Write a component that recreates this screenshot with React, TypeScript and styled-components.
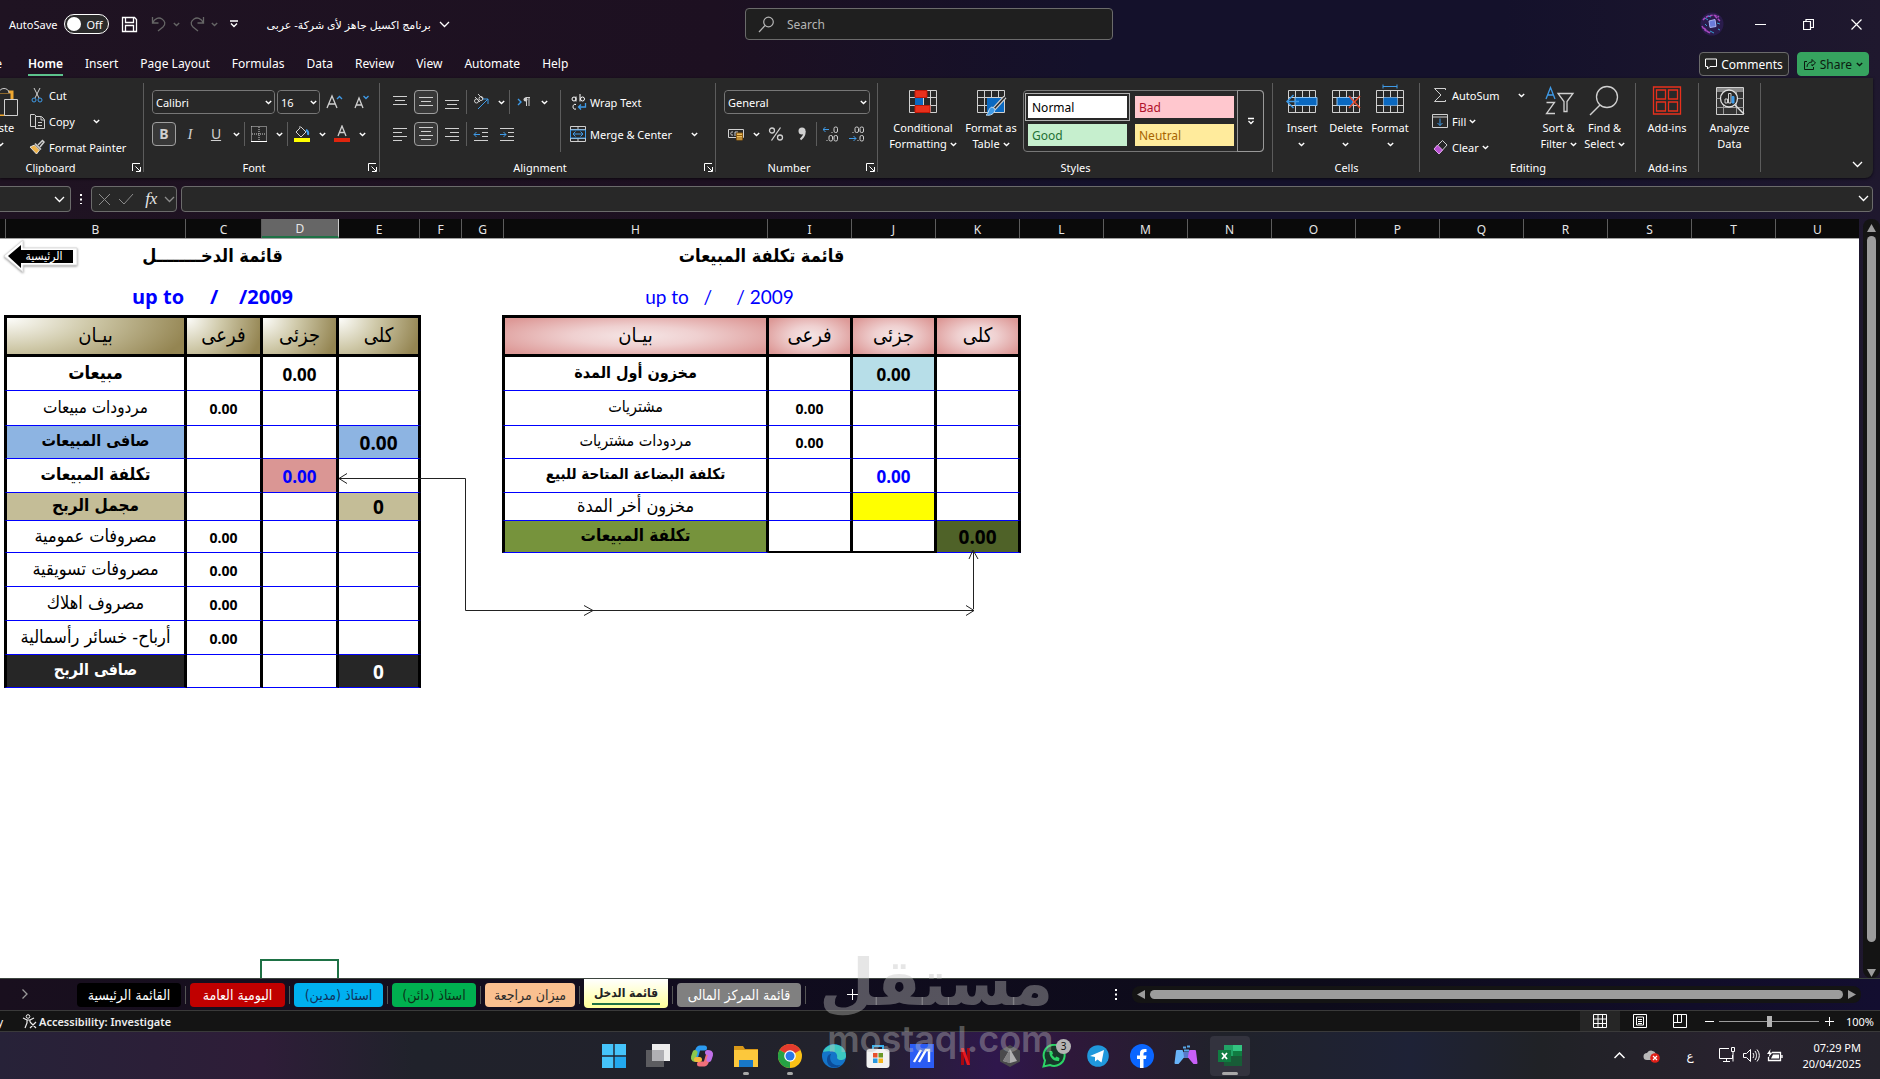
import React from "react";
import styled, { createGlobalStyle, css } from "styled-components";

const UI = `"Noto Sans", "DejaVu Sans", sans-serif`;
const NARROW = `"DejaVu Sans Condensed", "DejaVu Sans", sans-serif`;

const Global = createGlobalStyle`
  *, *::before, *::after { box-sizing: border-box; }
  body { margin: 0; background: #14112b; font-family: ${UI}; font-size: 12px; color: #fff; }
  button, input, select { font: inherit; color: inherit; }
  button { background: none; border: 0; padding: 0; cursor: pointer; }
`;

const Window = styled.div`
  display: flex; flex-direction: column; min-height: 100vh; overflow: hidden;
  position: relative;
  background: linear-gradient(90deg, #1f1322 0%, #1d1021 38%, #14112b 58%, #14112b 80%, #1f182e 100%);
`;

/* ---------- title bar ---------- */
const TitleBar = styled.header`
  display: grid; grid-template-columns: minmax(0, 736fr) 368px minmax(0, 767fr); align-items: center; height: 48px;
  padding-left: 9px;
`;
const QuickAccess = styled.div`display: flex; align-items: center; gap: 6px;`;
const ToggleLabel = styled.label`
  display: flex; align-items: center; gap: 7px; font-size: 11px;
  input { position: absolute; opacity: 0; }
`;
const ToggleTrack = styled.span`
  display: flex; align-items: center; gap: 5px; width: 45px; height: 20px; padding-left: 2px;
  border: 1px solid #fff; border-radius: 10px; background: #2b2b2b;
  &::before { content: ""; width: 14px; height: 14px; border-radius: 50%; background: #fff; }
`;
const QuickButton = styled.button<{ $w?: number; $dim?: boolean }>`
  display: flex; align-items: center; justify-content: center; gap: 6px; height: 24px;
  width: ${(p) => p.$w ?? 24}px; color: ${(p) => (p.$dim ? "#666" : "#fff")};
`;
const FileName = styled.button`
  display: flex; align-items: center; gap: 8px; font-size: 11px; margin-left: 17px; white-space: nowrap;
`;
const SearchBox = styled.label`
  display: flex; align-items: center; gap: 12px; height: 32px; padding: 0 12px;
  background: #1f1f1f; border: 1px solid #6b6b6b; border-radius: 4px; color: #b5b5b5;
  input { flex: 1; min-width: 0; border: 0; background: none; outline: 0; padding: 0; }
  input::placeholder { color: #b5b5b5; opacity: 1; }
`;
const WindowControls = styled.div`
  display: flex; justify-content: flex-end; align-items: center;
  button { width: 48px; height: 32px; display: grid; place-items: center; }
`;

/* ---------- ribbon tabs ---------- */
const TabRow = styled.nav`
  display: flex; align-items: center; height: 30px; padding: 2px 11px 0 0;
`;
const TabList = styled.div`display: flex; flex: 1; gap: 22px;`;
const RibbonTab = styled.button<{ $active?: boolean }>`
  height: 24px; font-size: 12px; border-bottom: 2px solid ${(p) => (p.$active ? "#5cc18c" : "transparent")};
  font-weight: ${(p) => (p.$active ? 600 : 400)};
`;
const CutTab = styled(RibbonTab)`
  width: 6px; display: flex; align-items: center; justify-content: flex-end; overflow: hidden; padding-right: 4px;
`;
const PillButton = styled.button<{ $green?: boolean }>`
  display: flex; align-items: center; gap: 4px; height: 24px; padding: 0 5px; margin-left: 8px;
  border-radius: 4px; border: 1px solid ${(p) => (p.$green ? "#36a35f" : "#6b6b6b")};
  background: ${(p) => (p.$green ? "#36a35f" : "#252525")}; color: ${(p) => (p.$green ? "#0b1a10" : "#fff")};
`;

/* ---------- ribbon ---------- */
const Ribbon = styled.section`
  display: flex; height: 100px; margin-right: 7px; background: #282828;
  border-bottom-right-radius: 8px; box-shadow: 0 1px 3px #0009;
`;
const Group = styled.div<{ $w: number }>`
  width: ${(p) => p.$w}px; flex: none; display: flex; flex-direction: column; position: relative;
  &::after { content: ""; position: absolute; right: 0; top: 5px; bottom: 6px; width: 1px; background: #5c5c5c; }
`;
const GroupBody = styled.div<{ $pad?: number; $top?: number }>`
  display: flex; flex: 1; min-height: 0; padding: ${(p) => p.$top ?? 4}px 7px 0 ${(p) => p.$pad ?? 8}px; white-space: nowrap;
`;
const GroupFoot = styled.div<{ $inset: number }>`
  display: flex; align-items: center; justify-content: center; height: 22px; flex: none; font-size: 11px; position: relative;
  padding-right: ${(p) => p.$inset}px;
  button { position: absolute; right: 3px; top: 7px; height: 9px; display: flex; }
`;
const Stack = styled.div<{ $gap?: number }>`display: flex; flex-direction: column; gap: ${(p) => p.$gap ?? 0}px;`;
const Row = styled.div<{ $tall?: boolean }>`display: flex; flex: none; align-items: center; gap: 2px; height: ${(p) => (p.$tall ? 26 : 24)}px;`;
const Divider = styled.span`width: 1px; height: 24px; background: #5c5c5c;`;
const TallDivider = styled.span`width: 1px; height: 62px; background: #5c5c5c; margin: 0 8px 0 10px;`;
const IconButton = styled.button<{ $on?: boolean }>`
  width: 24px; height: 24px; display: grid; place-items: center; color: #d0d0d0; font-size: 14px; line-height: 20px;
  ${(p) => p.$on && css`border: 1px solid #a0a0a0; border-radius: 4px; background: #383838;`}
`;
const ChevButton = styled.button`width: 12px; height: 24px; display: grid; place-items: center;`;
const TextButton = styled.button`
  display: flex; flex: none; align-items: center; height: 26px; gap: 3px; font-size: 11px;
`;
const IconSlot = styled.span`width: 18px; display: grid; place-items: center;`;
const Push = styled.span<{ $w: number }>`width: ${(p) => p.$w}px;`;
const BigButton = styled.button<{ $w: number }>`
  width: ${(p) => p.$w}px; display: flex; flex-direction: column; align-items: center; font-size: 11px; line-height: 16px;
  align-self: flex-start; padding-top: 2px; gap: 4px; white-space: nowrap;
  > span { display: flex; flex-direction: column; align-items: center; }
  > span > span { display: flex; align-items: center; gap: 3px; min-height: 16px; }
`;
const PasteColumn = styled.div`
  width: 20px; display: flex; justify-content: flex-end; overflow: hidden; margin-right: 8px;
`;
const Combo = styled.span<{ $w: number }>`
  display: grid; align-items: center; width: ${(p) => p.$w}px; height: 24px; border: 1px solid #777; border-radius: 4px;
  select { grid-area: 1 / 1; appearance: none; width: 100%; height: 22px; background: #282828; border: 0; outline: 0;
    border-radius: 4px; padding: 0 0 0 3px; font-size: 11px; }
  svg { grid-area: 1 / 1; justify-self: end; margin-right: 2px; pointer-events: none; }
`;
const Underlined = styled.span`text-decoration: underline;`;
const Italic = styled.i`font-family: "Liberation Serif", serif; font-size: 15px;`;
const Gallery = styled.div`
  display: grid; grid-template-columns: 107px 107px 25px; height: 62px; margin-top: 8px;
  border: 1px solid #777; border-radius: 4px;
`;
const GalleryColumn = styled.div`display: flex; flex-direction: column; padding: 2px 1px; `;
const StyleCell = styled.button<{ $bg: string; $fg: string; $on?: boolean }>`
  flex: 1; text-align: left; padding-left: 6px; background: ${(p) => p.$bg}; color: ${(p) => p.$fg};
  border: 1px solid ${(p) => (p.$on ? "#b0b0b0" : "#282828")}; box-shadow: inset 0 0 0 2px #282828; font-size: 12px;
`;
const GalleryMore = styled.button`border: 1px solid #999; border-radius: 0 4px 4px 0; margin: -1px; display: grid; place-items: center;`;
const CollapseButton = styled.button`margin: auto 10px 10px auto; display: flex;`;

/* ---------- formula bar ---------- */
const FormulaBar = styled.div`
  display: flex; align-items: center; height: 41px; padding: 7px 7px 6px 0;
`;
const fieldBox = css`height: 26px; border: 1px solid #6b6b6b; border-radius: 4px; background: #282828;`;
const NameBox = styled.div`
  ${fieldBox}; width: 71px; border-left: 0; border-radius: 0 4px 4px 0; display: flex; align-items: center; padding-right: 5px;
  input { flex: 1; min-width: 0; background: none; border: 0; outline: 0; }
`;
const Grip = styled.span`width: 20px; display: grid; place-items: center;`;
const FxBox = styled.div`
  ${fieldBox}; width: 86px; display: flex; align-items: center; justify-content: space-between; padding: 0 1px 0 6px; color: #8c8c8c;
  button { display: grid; place-items: center; height: 24px; }
`;
const FxButton = styled.button`color: #e6e6e6; font: italic 400 17px/24px "Liberation Serif", serif; padding-left: 5px;`;
const FormulaField = styled.div`
  ${fieldBox}; flex: 1; margin-left: 4px; display: flex; align-items: center; padding: 0 3px 2px 8px;
  input { flex: 1; background: none; border: 0; outline: 0; }
`;

/* ---------- sheet ---------- */
const Workbook = styled.main`display: flex; flex: 1;`;
const Sheet = styled.div`flex: 1; min-width: 0; display: flex; flex-direction: column; overflow: hidden;`;
const ColumnHeads = styled.div`
  display: grid; grid-template-columns: 6px 180px 76px 77px 81px 42px 42px 264px repeat(13, 84px);
  height: 20px; background: #0a0a0a; border-bottom: 1px solid #a0a0a0;
`;
const ColumnHead = styled.span<{ $sel?: boolean }>`
  display: flex; align-items: center; justify-content: center; border-right: 1px solid #5c5c5c; overflow: hidden;
  color: #e6e6e6; padding-top: 2px;
  ${(p) => p.$sel && css`background: #666; border-bottom: 2px solid #1e7145; border-right-color: #ccc;`}
`;
const Canvas = styled.div`
  flex: 1; background: #fff; color: #000; position: relative; display: flex; align-items: flex-start; gap: 81px; padding-left: 4px;
`;
const Statement = styled.table<{ $w: number }>`
  width: ${(p) => p.$w}px; table-layout: fixed; border-collapse: separate; border-spacing: 0; font-family: ${NARROW};
  td, th { padding: 0; text-align: center; overflow: hidden; white-space: nowrap; }
`;
const TitleCell = styled.th`&& { padding-bottom: 4px; } height: 38px; font-size: 18px; font-weight: 700; line-height: 24px;`;
const PeriodCell = styled.td<{ $bold?: boolean }>`
  && { white-space: pre; padding-top: 2px; }
  height: 38px; color: #00f; line-height: 28px;
  font-family: ${(p) => (p.$bold ? `"Open Sans"` : "Lato")}, sans-serif;
  font-size: ${(p) => (p.$bold ? 20 : 19)}px; font-weight: ${(p) => (p.$bold ? 700 : 400)};
`;
const HeadCell = styled.th<{ $tone: "olive" | "rose" }>`
  height: 42px; border: solid #000; border-width: 3px 3px 3px 0; font-size: 20px; font-weight: 400; line-height: 30px;
  && { padding-bottom: 3px; }
  &:first-child { border-left-width: 3px; }
  background: ${(p) =>
    p.$tone === "olive"
      ? "radial-gradient(ellipse 105% 190% at 0% 0%, #fdfdfb 0%, #cfc9a9 45%, #948552 100%)"
      : "radial-gradient(ellipse 60% 70% at 50% 50%, #f5e6e6 0%, #efd0d0 40%, #dd9997 100%)"};
`;
const BodyCell = styled.td<{ $bg?: string; $fg?: string; $size: number; $bold?: boolean; $h: number; $end?: boolean; $num?: boolean }>`
  height: ${(p) => p.$h}px; line-height: ${(p) => p.$h - 5}px; background: ${(p) => p.$bg ?? "#fff"}; color: ${(p) => p.$fg ?? "#000"};
  font-size: ${(p) => p.$size}px; font-weight: ${(p) => (p.$bold ? 700 : 400)};
  ${(p) => p.$num && css`font-family: "Open Sans", sans-serif; && { padding-top: 1px; }`}
  ${(p) => !p.$num && css`&& { padding-bottom: 3px; }`}
  border-right: 3px solid #000; border-bottom: ${(p) => (p.$end ? "2px solid #000" : "1px solid #00f")};
  &:first-child { border-left: 3px solid #000; }
`;
const Connector = styled.svg`position: absolute; left: 338px; top: 230px; pointer-events: none;`;
const SelectedCell = styled.div`
  position: absolute; left: 260px; bottom: 0; width: 79px; height: 19px; border: 2px solid #1e7145; border-bottom: 0;
`;
const HomeLink = styled.a`
  position: absolute; left: 2px; top: 0; width: 76px; height: 34px; color: #fff; text-decoration: none;
  display: grid; place-items: center; font: 12px/14px ${NARROW};
  svg, span { grid-area: 1 / 1; }
  svg { filter: drop-shadow(0 1px 1px #0006); }
  span { padding-left: 8px; position: relative; }
`;
const VScroll = styled.div`
  width: 17px; margin: 0 0 0 4px; background: #141414; border-radius: 8px; display: flex; flex-direction: column;
  align-items: center; padding: 5px 0 1px; gap: 4px; color: #9c9c9c;
`;
const Thumb = styled.div`flex: 1; background: #9c9c9c; border-radius: 5px; min-width: 9px;`;
const VThumb = styled(Thumb)`margin-bottom: 23px;`;

/* ---------- sheet tabs ---------- */
const SheetBar = styled.footer`
  display: flex; align-items: center; height: 32px; border-top: 1px solid #3d453f; padding: 0 19px 0 22px;
  background: linear-gradient(90deg, #190f1e, #100c1e 40%, #0d0b1a 70%, #130e30);
`;
const SheetTabs = styled.div`display: flex; align-items: center; margin-left: 49px; height: 31px;`;
const SheetTab = styled.button<{ $bg: string; $fg: string; $on?: boolean; $w: number }>`
  width: ${(p) => p.$w}px; height: 24px; border-radius: 4px; background: ${(p) => p.$bg}; color: ${(p) => p.$fg};
  font-size: 14px; line-height: 20px; font-family: ${NARROW}; white-space: nowrap;
  ${(p) => p.$on && css`font-weight: 700; font-size: 12px; height: 29px; align-self: flex-start; border-radius: 0 0 4px 4px;
    span { display: block; margin: 0 8px; border-bottom: 2px solid #1e7145; }`}
`;
const TabGap = styled.span`width: 9px; display: grid; place-items: center; &::before { content: ""; width: 1px; height: 18px; background: #555; }`;
const HScroll = styled.div`
  display: flex; align-items: center; width: 729px; height: 17px; background: #141414; border-radius: 8px; padding: 0 5px; gap: 5px; color: #9c9c9c;
  > div { height: 9px; }
`;
const AddButton = styled.button`margin-left: 37px; display: flex;`;
const BarGrip = styled.span`margin: 0 15px 0 auto; display: flex;`;

/* ---------- status bar ---------- */
const StatusBar = styled.div`
  display: flex; align-items: center; height: 22px; background: #141414; border: solid #3a3a3a; border-width: 1px 0;
  padding-right: 6px; font-size: 11px;
`;
const CutWord = styled.span`width: 3px; display: flex; justify-content: flex-end;`;
const AccessButton = styled.button`display: flex; align-items: center; gap: 2px; margin-left: 19px; font-weight: 600; font-size: 11px; color: #eee;`;
const ViewButton = styled.button<{ $on?: boolean }>`
  width: 40px; height: 20px; display: grid; place-items: center; background: ${(p) => (p.$on ? "#262626" : "none")};
`;
const Views = styled.div`display: flex; margin-left: auto;`;
const Zoom = styled.div`
  display: flex; align-items: center; gap: 5px; padding-left: 4px;
  > button { width: 10px; display: grid; place-items: center; }
  input { appearance: none; width: 100px; height: 12px; margin: 0; background: linear-gradient(#9c9c9c, #9c9c9c) center / 100% 1px no-repeat; }
  input::-webkit-slider-thumb { appearance: none; width: 5px; height: 11px; background: #b4b4b4; }
`;
const ZoomValue = styled.span`margin-left: 3px; width: 32px; text-align: right;`;

/* ---------- task bar ---------- */
const TaskBar = styled.div`
  display: grid; grid-template-columns: 1fr auto 1fr; align-items: center; height: 47px;
  background: linear-gradient(90deg, #272238 0%, #2e1d38 14%, #20222b 22%, #22222c 45%, #2f174c 53%, #2e183a 57%, #20222a 65%, #1e2236 75%, #202226 82%, #28222e 92%, #25232c 100%);
`;
const Apps = styled.div`grid-column: 2; display: flex; gap: 4px; margin-right: 36px; padding: 0 2px;`;
const AppButton = styled.button<{ $on?: boolean; $dot?: boolean }>`
  width: 40px; height: 40px; display: grid; place-items: center; border-radius: 4px; position: relative;
  background: ${(p) => (p.$on ? "#33333e" : "none")};
  ${(p) => (p.$on || p.$dot) && css`&::after { content: ""; position: absolute; bottom: 1px; left: 50%; height: 3px; border-radius: 2px;
    background: #a8a8a8; width: ${p.$on ? 16 : 6}px; margin-left: ${p.$on ? -8 : -3}px; }`}
`;
const Count = styled.span`
  position: absolute; right: 3px; top: 3px; width: 15px; height: 15px; border-radius: 50%; background: #b4b4b4; color: #111;
  font-size: 10px; line-height: 15px;
`;
const Tray = styled.div`display: flex; align-items: center; justify-content: flex-end; padding-right: 19px;`;
const TrayButton = styled.button<{ $w: number }>`width: ${(p) => p.$w}px; height: 32px; display: grid; place-items: center;`;
const Clock = styled.time`width: 74px; text-align: right; font-size: 11px; line-height: 16px;`;

const Watermark = styled.div`
  position: absolute; left: 44%; bottom: 18px; width: 226px; text-align: center; color: rgba(192, 192, 192, 0.4);
  pointer-events: none; white-space: nowrap;
`;
const MarkArabic = styled.div`font: 700 64px/68px "DejaVu Sans", sans-serif;`;
const MarkLatin = styled.div`font: 600 36px/44px Inter, sans-serif;`;

/* ---------- drawings ---------- */
type IconProps = { w?: number; h?: number; vb?: string; children: React.ReactNode; sw?: number };
const Icon = ({ w = 16, h = w, vb, children, sw = 1 }: IconProps) => (
  <svg width={w} height={h} viewBox={vb ?? `0 0 ${w} ${h}`} fill="none" stroke="currentColor" strokeWidth={sw} aria-hidden="true">
    {children}
  </svg>
);
const Chev = ({ big }: { big?: boolean }) => (
  <Icon w={big ? 11 : 7} h={big ? 7 : 5} sw={big ? 1.3 : 1.4}><path d={big ? "M1 1l4.500 4.500L10 1" : "M.8 1l2.700 2.500L6.200 1"} /></Icon>
);
const Launcher = () => <Icon w={9}><path d="M.5 8V.5H8M3.500 3.500l4.500 4.500M8.500 4v4.500H4" /></Icon>;
const Lines = ({ rows, widths, anchor }: { rows: number[]; widths: number[]; anchor: "s" | "m" | "e" }) => (
  <Icon w={16}>
    {rows.map((y, i) => {
      const x = anchor === "s" ? 1 : anchor === "e" ? 15 - widths[i] : 8 - widths[i] / 2;
      return <path key={y} d={`M${x} ${y}h${widths[i]}`} />;
    })}
  </Icon>
);
const B = "#3f9be8";
const GridIcon = ({ children }: { children?: React.ReactNode }) => (
  <Icon w={32}>
    <path d="M2.500 6.500h27v22h-27zM9.500 6.500v22M16.500 6.500v22M23.500 6.500v22M2.500 13.500h27M2.500 21.500h27" stroke="#d0d0d0" />
    {children}
  </Icon>
);

const Drop = ({ label }: { label: string }) => <ChevButton aria-label={label}><Chev /></ChevButton>;
const Foot = ({ text, launch, inset }: { text: string; launch?: boolean; inset?: number }) => (
  <GroupFoot $inset={inset ?? (launch ? 16 : 0)}>{text}{launch && <button aria-label={`${text} settings`}><Launcher /></button>}</GroupFoot>
);

/* ---------- data ---------- */
const COLUMNS = "A B C D E F G H I J K L M N O P Q R S T U".split(" ");

type Cell = { t?: string; bg?: string; fg?: string; s?: number; b?: boolean; end?: boolean };
type Line = { h: number; cells: Cell[] };
const _: Cell = {};
const small = (t: string): Cell => ({ t, s: 14, b: true });
const mid = (t: string, extra: Cell = {}): Cell => ({ t, s: 17, b: true, ...extra });

const INCOME: Line[] = [
  { h: 34, cells: [{ t: "مبيعات", s: 18, b: true }, _, mid("0.00"), _] },
  { h: 35, cells: [{ t: "مردودات مبيعات", s: 17 }, small("0.00"), _, _] },
  { h: 33, cells: [{ t: "صافى المبيعات", s: 16, b: true, bg: "#8db4e2" }, _, _, { t: "0.00", s: 19, b: true, bg: "#8db4e2" }] },
  { h: 34, cells: [{ t: "تكلفة المبيعات", s: 17, b: true }, _, mid("0.00", { bg: "#da9694", fg: "#00f" }), _] },
  { h: 28, cells: [{ t: "مجمل الربح", s: 17, b: true, bg: "#c4bd97" }, _, _, { t: "0", s: 19, b: true, bg: "#c4bd97" }] },
  { h: 32, cells: [{ t: "مصروفات عمومية", s: 18 }, small("0.00"), _, _] },
  { h: 34, cells: [{ t: "مصروفات تسويقية", s: 18 }, small("0.00"), _, _] },
  { h: 34, cells: [{ t: "مصروف اهلاك", s: 18 }, small("0.00"), _, _] },
  { h: 34, cells: [{ t: "أرباح- خسائر رأسمالية", s: 18 }, small("0.00"), _, _] },
  { h: 33, cells: [{ t: "صافى الربح", s: 16, b: true, bg: "#262626", fg: "#fff" }, _, _, { t: "0", s: 19, b: true, bg: "#262626", fg: "#fff" }] },
];
const COST: Line[] = [
  { h: 34, cells: [{ t: "مخزون أول المدة", s: 16, b: true }, _, mid("0.00", { bg: "#b7dee8" }), _] },
  { h: 35, cells: [{ t: "مشتريات", s: 16 }, small("0.00"), _, _] },
  { h: 33, cells: [{ t: "مردودات مشتريات", s: 16 }, small("0.00"), _, _] },
  { h: 34, cells: [{ t: "تكلفة البضاعة المتاحة للبيع", s: 15, b: true }, _, mid("0.00", { fg: "#00f" }), _] },
  { h: 28, cells: [{ t: "مخزون أخر المدة", s: 18 }, _, { bg: "#ff0" }, _] },
  { h: 32, cells: [{ t: "تكلفة المبيعات", s: 17, b: true, bg: "#76933c" }, { end: true }, { end: true }, { t: "0.00", s: 19, b: true, bg: "#4f6228" }] },
];

const StatementTable = (p: { title: string; period: string; bold?: boolean; span: number; tone: "olive" | "rose"; cols: number[]; lines: Line[] }) => (
  <Statement $w={p.cols.reduce((a, c) => a + c, 0)}>
    <colgroup>{p.cols.map((c, i) => <col key={i} width={c} />)}</colgroup>
    <thead>
      <tr><TitleCell colSpan={4} dir="rtl">{p.title}</TitleCell></tr>
      <tr><PeriodCell colSpan={p.span} $bold={p.bold}>{p.period}</PeriodCell></tr>
      <tr>{["بيـان", "فرعى", "جزئى", "كلى"].map((t) => <HeadCell key={t} $tone={p.tone} dir="rtl">{t}</HeadCell>)}</tr>
    </thead>
    <tbody>
      {p.lines.map((l, r) => (
        <tr key={r}>
          {l.cells.map((c, i) => (
            <BodyCell key={i} $h={l.h} $bg={c.bg} $fg={c.fg} $size={c.s ?? 14} $bold={c.b} $end={c.end} $num={i > 0} dir={i ? undefined : "rtl"}>{c.t}</BodyCell>
          ))}
        </tr>
      ))}
    </tbody>
  </Statement>
);

const SHEETS = [
  { t: "القائمة الرئيسية", bg: "#000", fg: "#fff", w: 104 },
  { t: "اليومية العامة", bg: "#c00000", fg: "#fff", w: 95 },
  { t: "استاذ (مدين)", bg: "#00b0f0", fg: "#10305c", w: 89 },
  { t: "استاذ (دائن)", bg: "#00b050", fg: "#0c3018", w: 84 },
  { t: "ميزان مراجعة", bg: "#fac090", fg: "#2b2b2b", w: 90 },
  { t: "قائمة الدخل", bg: "linear-gradient(#fff, #ffff99)", fg: "#222", w: 84, on: true },
  { t: "قائمة المركز المالى", bg: "#808080", fg: "#fff", w: 124 },
];

/* ---------- ribbon groups ---------- */
const Clipboard = () => (
  <Group $w={144}>
    <GroupBody $pad={0}>
      <PasteColumn>
        <BigButton $w={40} aria-label="Paste">
          <Icon w={40} h={32}>
            <path d="M16 8h16v24H16z" stroke="#f0a830" strokeWidth="3" /><path d="M19 9c0-6 10-6 10 0" stroke="#d0d0d0" fill="#282828" />
            <path d="M24.500 15.500h13v16h-13z" stroke="#d0d0d0" fill="#282828" />
          </Icon>
          <span><span>Paste</span><span><Chev /></span></span>
        </BigButton>
      </PasteColumn>
      <Stack>
        <TextButton><IconSlot><Icon><path d="M5 1l5 10M11 1L6 11" stroke="#d0d0d0" /><circle cx="5" cy="13" r="2" stroke={B} /><circle cx="11" cy="13" r="2" stroke={B} /></Icon></IconSlot>Cut</TextButton>
        <Row $tall><TextButton><IconSlot><Icon w={17}><path d="M6 13.500H1.500v-12h4l2 2M6.500 3.500h6l3 3v9h-9zM12 4v3h3M9 9.500h4M9 12.500h4" stroke="#d0d0d0" /></Icon></IconSlot>Copy</TextButton><Push $w={12} /><Drop label="Copy options" /></Row>
        <TextButton><IconSlot><Icon><path d="M9 6l4.500-4.500 1.500 1.500-4 5M6 4.500l6 6" stroke="#d0d0d0" strokeWidth="1.500" /><path d="M5.500 6l5 5-3 4-6.500-7z" fill="#f0b44a" stroke="#e0e0e0" /></Icon></IconSlot>Format Painter</TextButton>
      </Stack>
    </GroupBody>
    <Foot text="Clipboard" launch inset={43} />
  </Group>
);

const FontGroup = () => (
  <Group $w={236}>
    <GroupBody $top={12}>
      <Stack $gap={8}>
        <Row>
          <Combo $w={123}><select aria-label="Font"><option>Calibri</option></select><Chev /></Combo>
          <Combo $w={43}><select aria-label="Font size"><option>16</option></select><Chev /></Combo>
          <IconButton aria-label="Increase font size"><Icon w={18}><path d="M2 15L7 3l5 12M4 11h6" strokeWidth="1.300" /><path d="M12 6l2.500-2.500L17 6" stroke={B} strokeWidth="1.300" /></Icon></IconButton>
          <IconButton aria-label="Decrease font size"><Icon w={18}><path d="M4 15L8 5l4 10M5.500 12h5" strokeWidth="1.300" /><path d="M12.500 3l2.500 2.500L17.500 3" stroke={B} strokeWidth="1.300" /></Icon></IconButton>
        </Row>
        <Row>
          <IconButton $on><b>B</b></IconButton>
          <IconButton><Italic>I</Italic></IconButton>
          <IconButton><Underlined>U</Underlined></IconButton>
          <Drop label="Underline options" /><Divider />
          <IconButton aria-label="Borders"><Icon><path d="M.5.5h15v15M.5.5v15M8 1v14M1 8h14" strokeDasharray="1 1" /><path d="M0 15.500h16" stroke="#fff" /></Icon></IconButton>
          <Drop label="Border options" /><Divider />
          <IconButton aria-label="Fill color"><Icon w={18}><path d="M8 2l5 5-5 5-5-5 4-4V1" /><path d="M13 5c2 1 2.500 3 2 5" stroke={B} strokeWidth="2" /><path d="M1 13h16v4H1z" fill="#ff0" stroke="none" /></Icon></IconButton>
          <Drop label="Fill options" />
          <IconButton aria-label="Font color"><Icon w={18}><path d="M5 11L9 1l4 10M6.500 7.500h5" strokeWidth="1.300" /><path d="M1 13h16v4H1z" fill="#e0250e" stroke="none" /></Icon></IconButton>
          <Drop label="Font color options" />
        </Row>
      </Stack>
    </GroupBody>
    <Foot text="Font" launch />
  </Group>
);

const Alignment = () => (
  <Group $w={336}>
    <GroupBody $top={12}>
      <Stack $gap={8}>
        <Row>
          <IconButton aria-label="Top align"><Lines rows={[2.5, 6.5, 10.5]} widths={[14, 10, 14]} anchor="m" /></IconButton>
          <IconButton $on aria-label="Middle align"><Lines rows={[3.5, 7.5, 11.5]} widths={[14, 10, 14]} anchor="m" /></IconButton>
          <IconButton aria-label="Bottom align"><Lines rows={[6.5, 10.5, 14.5]} widths={[14, 10, 14]} anchor="m" /></IconButton>
          <Divider />
          <IconButton aria-label="Orientation"><Icon><circle cx="3.500" cy="7" r="2" /><path d="M2 3l5 5" /><circle cx="8" cy="4.500" r="2" /><path d="M5 0l5 5" /><path d="M5 15L15 5M10 5h5v5" stroke={B} /></Icon></IconButton>
          <Drop label="Orientation options" /><Divider />
          <IconButton aria-label="Text direction"><Icon><path d="M2 5l3 3-3 3" stroke={B} strokeWidth="1.400" /><path d="M14 3.500H9.500M10.500 3v9M13 3v9" /><circle cx="9.500" cy="5.500" r="2" fill="currentColor" stroke="none" /></Icon></IconButton>
          <Drop label="Direction options" />
        </Row>
        <Row>
          <IconButton aria-label="Align left"><Lines rows={[2.5, 6.5, 10.5, 14.5]} widths={[14, 9, 14, 9]} anchor="s" /></IconButton>
          <IconButton $on aria-label="Center"><Lines rows={[1.5, 5.5, 9.5, 13.5]} widths={[14, 10, 14, 10]} anchor="m" /></IconButton>
          <IconButton aria-label="Align right"><Lines rows={[2.5, 6.5, 10.5, 14.5]} widths={[14, 9, 14, 9]} anchor="e" /></IconButton>
          <Divider />
          <IconButton aria-label="Decrease indent"><Icon><path d="M1 2.500h14M9 6.500h6M9 10.500h6M1 14.500h14" /><path d="M7 8.500H1M3.500 6L1 8.500 3.500 11" stroke={B} /></Icon></IconButton>
          <IconButton aria-label="Increase indent"><Icon><path d="M1 2.500h14M9 6.500h6M9 10.500h6M1 14.500h14" /><path d="M1 8.500h6M4.500 6L7 8.500 4.500 11" stroke={B} /></Icon></IconButton>
        </Row>
      </Stack>
      <TallDivider />
      <Stack $gap={8}>
        <Row><TextButton><IconSlot><Icon w={17}><circle cx="4" cy="5" r="2" /><path d="M6 2.500v5M10 0v7.500M6 10.500c-4-1.500-4 6 0 4.500" /><circle cx="12.500" cy="5" r="2" /><path d="M15.500 9v4H9M11 10.500L8.500 13l2.500 2.500" stroke={B} strokeWidth="1.300" /></Icon></IconSlot>Wrap Text</TextButton></Row>
        <Row><TextButton><IconSlot><Icon><path d="M.5.500h15v15H.5zM.5 3.500h15M.5 12.500h15M8 .5v3M8 12.500v3" stroke="#d0d0d0" /><path d="M.5 4h15v8H.5zM3 8h10M5.500 5.500L3 8l2.500 2.500M10.500 5.500L13 8l-2.500 2.500" stroke={B} /></Icon></IconSlot>Merge &amp; Center</TextButton><Push $w={12} /><Drop label="Merge options" /></Row>
      </Stack>
    </GroupBody>
    <Foot text="Alignment" launch />
  </Group>
);

const NumberGroup = () => (
  <Group $w={162}>
    <GroupBody $top={12}>
      <Stack $gap={8}>
        <Combo $w={146}><select aria-label="Number format"><option>General</option></select><Chev /></Combo>
        <Row>
          <IconButton aria-label="Accounting format"><Icon w={18}><path d="M1.500 4.500h15v8h-15zM6 7c-3-1-3 4 0 3M8 11V7h3" /><path d="M9.500 8h6v7h-6zM9.500 10.500h6M9.500 13h6" fill="#f0c060" stroke="#8a5a10" /></Icon></IconButton>
          <Drop label="Accounting options" />
          <IconButton aria-label="Percent"><Icon sw={1.3}><circle cx="4" cy="4.500" r="2.500" /><circle cx="12" cy="11.500" r="2.500" /><path d="M12.500 1.500l-9 13" /></Icon></IconButton>
          <IconButton aria-label="Comma"><Icon><circle cx="8" cy="5" r="3.500" fill="currentColor" stroke="none" /><path d="M10.500 5c.5 4-1 6-4 8.500" strokeWidth="2" /></Icon></IconButton>
          <Divider />
          <IconButton aria-label="Increase decimal"><Icon><path d="M6 3.500H0M2.500 1L0 3.500 2.500 6" stroke={B} /><rect x="11" y="1" width="3.500" height="5.500" rx="1.500" /><rect x="6" y="9.500" width="3.500" height="5.500" rx="1.500" /><rect x="11" y="9.500" width="3.500" height="5.500" rx="1.500" /><path d="M8.500 6.500h1M3.500 14.500h1" /></Icon></IconButton>
          <IconButton aria-label="Decrease decimal"><Icon><path d="M0 12.500h7M4.500 10L7 12.500 4.500 15" stroke={B} /><rect x="6" y="1" width="3.500" height="5.500" rx="1.500" /><rect x="11" y="1" width="3.500" height="5.500" rx="1.500" /><rect x="11" y="9.500" width="3.500" height="5.500" rx="1.500" /><path d="M3.500 6.500h1M8.500 14.500h1" /></Icon></IconButton>
        </Row>
      </Stack>
    </GroupBody>
    <Foot text="Number" launch />
  </Group>
);

const StylesGroup = () => (
  <Group $w={395}>
    <GroupBody $pad={9}>
      <BigButton $w={72}>
        <GridIcon><path d="M8 6.500h12v7H8zM8 21.500h15v7H8z" fill="#e8301c" stroke="#c01808" /><path d="M8 14h8v7H8z" fill="#0a68c0" stroke="none" /></GridIcon>
        <span><span>Conditional</span><span>Formatting <Chev /></span></span>
      </BigButton>
      <BigButton $w={64}>
        <GridIcon><path d="M12 14h17v14H12z" fill="#0a68c0" stroke="none" /><path d="M30 13L19 25" stroke="#d0d0d0" strokeWidth="4" /><path d="M30 13L19 25" stroke="#282828" strokeWidth="1.500" /><path d="M20 25c0 5-5 7-9 6 3-1 2-7 6-8z" fill="#3f9be8" stroke="#bcd8f0" /></GridIcon>
        <span><span>Format as</span><span>Table <Chev /></span></span>
      </BigButton>
      <Gallery>
        <GalleryColumn><StyleCell $on $bg="#fff" $fg="#000">Normal</StyleCell><StyleCell $bg="#c6efce" $fg="#1f7035">Good</StyleCell></GalleryColumn>
        <GalleryColumn><StyleCell $bg="#ffc7ce" $fg="#b0102a">Bad</StyleCell><StyleCell $bg="#ffeb9c" $fg="#a86400">Neutral</StyleCell></GalleryColumn>
        <GalleryMore aria-label="More styles"><Icon w={8} h={8}><path d="M1 1.500h6M1.500 4L4 6.500 6.500 4" strokeWidth="1.300" /></Icon></GalleryMore>
      </Gallery>
    </GroupBody>
    <Foot text="Styles" />
  </Group>
);

const Cells = () => (
  <Group $w={147}>
    <GroupBody $pad={7}>
      <BigButton $w={44}>
        <GridIcon><path d="M9 13.500h22v8H9z" fill="#0a68c0" stroke="#8cc4f4" /><path d="M13 17.500H1.500M7.500 11l-6.500 6.500 6.500 6.500" stroke={B} strokeWidth="1.500" /></GridIcon>
        <span><span>Insert</span><span><Chev /></span></span>
      </BigButton>
      <BigButton $w={44}>
        <GridIcon><path d="M7 13.500h16v8H7z" fill="#0a68c0" stroke="#8cc4f4" /><path d="M19 12l11 12M30 12L19 24" stroke="#e04a2c" strokeWidth="1.600" /></GridIcon>
        <span><span>Delete</span><span><Chev /></span></span>
      </BigButton>
      <BigButton $w={44}>
        <GridIcon><path d="M10 14h13v7H10z" fill="#0a68c0" stroke="#0a68c0" /><path d="M9 2.500h14M9 .5v4M23 .5v4" stroke={B} /></GridIcon>
        <span><span>Format</span><span><Chev /></span></span>
      </BigButton>
    </GroupBody>
    <Foot text="Cells" />
  </Group>
);

const Editing = () => (
  <Group $w={216}>
    <GroupBody $pad={11}>
      <Stack>
        <Row $tall><TextButton><IconSlot><Icon><path d="M13.500 3V1.500H2.500L9 8l-6.500 6.500h11V13" stroke="#d0d0d0" /></Icon></IconSlot>AutoSum</TextButton><Push $w={12} /><Drop label="AutoSum options" /></Row>
        <TextButton><IconSlot><Icon><path d="M.5 1.500h15v13H.5zM.5 4h15" stroke="#d0d0d0" /><path d="M8 5.500v7M5.500 10L8 12.500l2.500-2.500" stroke={B} /></Icon></IconSlot>Fill <Chev /></TextButton>
        <TextButton><IconSlot><Icon><path d="M10.500 1.500L15 6l-8 9-5-5z" stroke="#d0d0d0" /><path d="M5.500 6L10.500 11 7 15l-5-5z" fill="#b850d0" stroke="#e0a0f0" /></Icon></IconSlot>Clear <Chev /></TextButton>
      </Stack>
      <Push $w={8} />
      <BigButton $w={46}>
        <Icon w={32}><path d="M3 15L7.500 3.500 12 15M4.500 11h6" stroke={B} strokeWidth="1.300" /><path d="M3.500 18.500h8l-8 11h8.500M15 9.500h15l-6 8v10h-3v-10z" stroke="#d0d0d0" strokeWidth="1.300" /></Icon>
        <span><span>Sort &amp;</span><span>Filter <Chev /></span></span>
      </BigButton>
      <BigButton $w={46}>
        <Icon w={32}><circle cx="18" cy="13" r="10.500" stroke="#d0d0d0" strokeWidth="1.300" /><path d="M11 21L1 31" stroke="#d0d0d0" strokeWidth="1.500" /></Icon>
        <span><span>Find &amp;</span><span>Select <Chev /></span></span>
      </BigButton>
    </GroupBody>
    <Foot text="Editing" />
  </Group>
);

const APPS: { name: string; on?: boolean; dot?: boolean; art: React.ReactNode; count?: number }[] = [
  { name: "Start", art: <g stroke="none" fill="#45c4fa"><path d="M0 0h11.300v11.300H0zM12.700 0H24v11.300H12.700zM0 12.700h11.300V24H0z" /><path d="M12.700 12.700H24V24H12.700z" fill="#22a8ee" /></g> },
  { name: "Task view", art: <g stroke="none"><path d="M6 0h18v17H6z" fill="#ececec" /><path d="M0 6h18v17H0z" fill="#5c5c60" /><path d="M6 6h12v11H6z" fill="#b0b0b4" /></g> },
  { name: "Copilot", art: <g strokeLinecap="round" strokeLinejoin="round" strokeWidth="5"><path d="M14.500 4H9.500c-2 0-2.500 5-4 9" stroke="#2b9bf0" /><path d="M5 8.500L3.500 13c-.5 2 .5 2.500 3 2.500" stroke="#8cc84c" /><path d="M9.500 20h5c2 0 2.500-5 4-9" stroke="#f0707a" /><path d="M19 15.500l1.500-4.500c.5-2-.5-2.500-3-2.500" stroke="#c070e8" /><path d="M6.500 15.500h3" stroke="#f4b83c" /></g> },
  { name: "File Explorer", dot: true, art: <g stroke="none"><path d="M0 2h9l2 3h13v6H0z" fill="#d89818" /><path d="M0 6h24v17H0z" fill="#fcc83c" /><path d="M5 16h14v7H5z" fill="#1878c8" /></g> },
  { name: "Chrome", dot: true, art: <g stroke="none"><circle cx="12" cy="12" r="12" fill="#fbc116" /><path d="M12 12L1.600 6A12 12 0 0 1 22.400 6z" fill="#e33b2e" /><path d="M12 12L1.600 6A12 12 0 0 0 12 24z" fill="#26a244" /><circle cx="12" cy="12" r="5.800" fill="#fff" /><circle cx="12" cy="12" r="4.500" fill="#2a78e8" /></g> },
  { name: "Edge", art: <g stroke="none"><circle cx="12" cy="12" r="12" fill="#1474c8" /><path d="M1 8C5-3 24-2 24 12c0 5-8 5-9 2 1-4-2-7-6-7-4 0-7 1-8 1z" fill="#3cc8c0" /><path d="M9 10c-3 6 2 13 10 11-6 5-14 2-14-5 0-4 2-6 4-6z" fill="#0c4c98" /></g> },
  { name: "Microsoft Store", art: <g stroke="none"><path d="M7 6V2h10v4" fill="none" stroke="#38b0f0" strokeWidth="2" /><rect x="0.500" y="5" width="23" height="19" rx="3" fill="#f2f2f2" /><path d="M7 9h4.500v4.500H7z" fill="#e8502c" /><path d="M12.500 9H17v4.500h-4.500z" fill="#6a9828" /><path d="M7 14.500h4.500V19H7z" fill="#2898e0" /><path d="M12.500 14.500H17V19h-4.500z" fill="#f4b41c" /></g> },
  { name: "MyASUS", art: <g stroke="none"><path d="M0 0h24v24H0z" fill="#2b5cf4" /><path d="M4 18L11 6M9 18l7-12h3v12" stroke="#fff" strokeWidth="2.400" fill="none" /></g> },
  { name: "Netflix", art: <g stroke="none"><path d="M7 4h3v17H7zM13 4h3v17h-3z" fill="#a80810" /><path d="M7 4h3l6 17h-3z" fill="#e81820" /></g> },
  { name: "Game launcher", art: <g stroke="none"><path d="M12 1l10 5.500v11L12 23 2 17.500v-11z" fill="#4a4a4c" /><path d="M12 5l7 12-7 2-7-2z" fill="#b0b0b0" /><path d="M12 5v14l-7-2z" fill="#808082" /></g> },
  { name: "WhatsApp", count: 3, art: <g><path d="M1.500 22.500l1.500-6A10.500 10.500 0 1 1 8 21z" stroke="#2bd466" strokeWidth="2" fill="#17382a" /><path d="M7.500 7c-1 5 4 11 9.500 10l.5-3-3-1.500-1.500 1.500-3-3L11 9.500 10 7z" fill="#2bd466" stroke="none" /></g> },
  { name: "Telegram", art: <g stroke="none"><circle cx="12" cy="12" r="10.800" fill="#2098dc" /><path d="M4 12l14-6-2.500 12.500-4-3-2.500 2v-4.500z" fill="#fff" /></g> },
  { name: "Facebook", art: <g stroke="none"><circle cx="12" cy="12" r="12" fill="#0a66ff" /><path d="M10 24v-9H7v-3.500h3V9c0-3 2-4.500 6.500-4V8c-3 0-3 .5-3 3.500h3L16 15h-2.500v9z" fill="#fff" /></g> },
  { name: "Games", art: <g stroke="none"><path d="M7 8h10v6H7z" fill="#5878c8" /><path d="M1.500 19L3 7h5l1 6-5 6z" fill="#68b4f8" stroke="#68b4f8" strokeWidth="2" strokeLinejoin="round" /><path d="M22.500 19L21 7h-5l-1 6 5 6z" fill="#c860f8" stroke="#c860f8" strokeWidth="2" strokeLinejoin="round" /><path d="M9 3.500h3M13 2.500h3M10 6.500h5" stroke="#58a8e8" strokeWidth="2" /></g> },
  { name: "Excel", on: true, art: <g stroke="none"><path d="M6 1h9v11H6z" fill="#21a366" /><path d="M15 1h9v6h-9z" fill="#33c481" /><path d="M15 7h9v6h-9z" fill="#107c41" /><path d="M6 12h18v10H6z" fill="#185c37" /><path d="M0 6h13v12H0z" fill="#107c41" /><path d="M4 9l5 6M9 9l-5 6" stroke="#fff" strokeWidth="1.800" /></g> },
];

export default function App() {
  return (
    <Window>
      <Global />
      <TitleBar>
        <QuickAccess>
          <ToggleLabel>AutoSave<input type="checkbox" /><ToggleTrack>Off</ToggleTrack></ToggleLabel>
          <QuickButton $w={28} aria-label="Save"><Icon w={17}><path d="M1.500 1.500h12l2 2v12h-14zM4.500 1.500v5h8v-5M4.500 15.500v-6h8v6" strokeWidth="1.300" /></Icon></QuickButton>
          <QuickButton $w={32} $dim aria-label="Undo"><Icon><path d="M1.500 1v6h6M1.500 7C4 2 8 1 11 3s4 5 1 8l-5 4" strokeWidth="1.300" /></Icon><Chev /></QuickButton>
          <QuickButton $w={32} $dim aria-label="Redo"><Icon><path d="M14.500 1v6h-6M14.500 7C12 2 8 1 5 3s-4 5-1 8l5 4" strokeWidth="1.300" /></Icon><Chev /></QuickButton>
          <QuickButton $w={18} aria-label="Customize toolbar"><Icon w={8} h={8}><path d="M0 1h8M1 3.500L4 6.500 7 3.500" strokeWidth="1.400" /></Icon></QuickButton>
          <FileName><span dir="rtl">برنامج اكسيل جاهز لأى شركة- عربى</span><Chev big /></FileName>
        </QuickAccess>
        <SearchBox><Icon w={17}><circle cx="10.500" cy="6" r="4.800" strokeWidth="1.200" /><path d="M7 9.500L1 16" strokeWidth="1.200" /></Icon><input placeholder="Search" aria-label="Search" /></SearchBox>
        <WindowControls>
          <button aria-label="Account">
            <Icon w={24}><circle cx="12" cy="12" r="11.500" fill="#2a1c4c" stroke="none" /><path d="M3 8c4-5 11-6 16-3M2 14c2 4 5 6 9 7M15 4l5 5M4 16l4 4" stroke="#a848c0" strokeWidth="1.500" strokeDasharray="3 1" /><path d="M9 9l6-1.500 1 7-6 1z" fill="#6a7ad8" stroke="#a8b4f0" /><path d="M10 19l4 2M5 6l3 2M18 17l2 1M8 4l3 1M17 11l3 1M5 12l2 2" stroke="#38a0d0" /></Icon>
          </button>
          <button aria-label="Minimize"><Icon w={11}><path d="M0 5.500h11" /></Icon></button>
          <button aria-label="Restore"><Icon w={11}><path d="M.5 2.500h7v8h-7zM3 2.500V.500h7.500v8h-3" strokeWidth="1.200" /></Icon></button>
          <button aria-label="Close"><Icon w={11}><path d="M.5.500l10 10M10.500.500l-10 10" strokeWidth="1.200" /></Icon></button>
        </WindowControls>
      </TitleBar>

      <TabRow>
        <TabList>
          <CutTab>File</CutTab>
          {["Home", "Insert", "Page Layout", "Formulas", "Data", "Review", "View", "Automate", "Help"].map((t) => (
            <RibbonTab key={t} $active={t === "Home"}>{t}</RibbonTab>
          ))}
        </TabList>
        <PillButton><Icon w={12}><path d="M.5 1h11v7.500H5L2.500 11V8.500h-2z" /></Icon>Comments</PillButton>
        <PillButton $green><Icon w={13}><path d="M4 3.500H1.500v8h9V9M4 9c0-3 2-5 5-5V1.500L12.500 5 9 8V6" /></Icon>Share <Chev /></PillButton>
      </TabRow>

      <Ribbon>
        <Clipboard /><FontGroup /><Alignment /><NumberGroup /><StylesGroup /><Cells /><Editing />
        <Group $w={63}>
          <GroupBody $pad={6}>
            <BigButton $w={50}><Icon w={32} sw={1.3}><path d="M2.500 3h27v27h-27zM5.500 6h9v9h-9zM17.500 6h9v9h-9zM5.500 18h9v9h-9zM17.500 18h9v9h-9z" stroke="#e8301c" /></Icon><span>Add-ins</span></BigButton>
          </GroupBody>
          <Foot text="Add-ins" />
        </Group>
        <Group $w={62}>
          <GroupBody $pad={6}>
            <BigButton $w={50}>
              <Icon w={32}><path d="M2.500 3.500h27v27h-27z" fill="#333" stroke="#d0d0d0" /><path d="M3 4h26v4H3z" fill="#888" stroke="none" /><path d="M2.500 14.500h27M2.500 23.500h27M9.500 8v22M22.500 8v22" stroke="#999" /><circle cx="15" cy="14.500" r="8.500" fill="#282828" stroke="#e0e0e0" strokeWidth="1.300" /><path d="M21 21l9 9" stroke="#e0e0e0" strokeWidth="1.500" /><path d="M11 15h2.500v4H11zM14.500 9.500h2.500V19h-2.500z" stroke="#d0d0d0" /><path d="M18 12.500h2V19h-2z" fill={B} stroke={B} /></Icon>
              <span><span>Analyze</span><span>Data</span></span>
            </BigButton>
          </GroupBody>
        </Group>
        <CollapseButton aria-label="Collapse ribbon"><Chev big /></CollapseButton>
      </Ribbon>

      <FormulaBar>
        <NameBox><input aria-label="Name box" /><Chev big /></NameBox>
        <Grip><Icon w={2} h={12}><path d="M1 1v10" strokeWidth="2" strokeDasharray="2 2.500" /></Icon></Grip>
        <FxBox>
          <button aria-label="Cancel"><Icon w={13}><path d="M1 1l11 11M12 1L1 12" /></Icon></button>
          <button aria-label="Enter"><Icon w={16} h={12}><path d="M1 6l5 5 9-10" /></Icon></button>
          <FxButton>fx</FxButton>
          <button aria-label="Function options"><Chev big /></button>
        </FxBox>
        <FormulaField><input aria-label="Formula bar" /><Chev big /></FormulaField>
      </FormulaBar>

      <Workbook>
        <Sheet>
          <ColumnHeads>{COLUMNS.map((c) => <ColumnHead key={c} $sel={c === "D"}>{c === "A" ? "" : c}</ColumnHead>)}</ColumnHeads>
          <Canvas>
            <StatementTable title="قائمة الدخــــــــل" period="up to     /    /2009" bold span={4} tone="olive" cols={[183, 76, 76, 82]} lines={INCOME} />
            <StatementTable title="قائمة تكلفة المبيعات" period="up to   /     / 2009" span={3} tone="rose" cols={[267, 84, 84, 84]} lines={COST} />
            <Connector width="645" height="150" fill="none" stroke="#222">
              <path d="M1 9.500h126.500v132H636M635.500 140V83" />
              <path d="M9 4.500l-8 5 8 5M246 136.500l9 5-9 5M628 136.500l8 5-8 5M631 90l4-9 5 9" />
            </Connector>
            <HomeLink href="#home">
              <Icon w={76} h={34}>
                <path d="M2 17L21 1v8h54v17H21v7z" fill="#fff" stroke="#ddd" />
                <path d="M6 17l13-11v5h52v13H19v5z" fill="#000" stroke="none" />
              </Icon>
              <span dir="rtl">الرئيسية</span>
            </HomeLink>
            <SelectedCell />
          </Canvas>
        </Sheet>
        <VScroll>
          <Icon w={9} h={8}><path d="M4.500 0L9 8H0z" fill="currentColor" stroke="none" /></Icon>
          <VThumb />
          <Icon w={9} h={8}><path d="M4.500 8L9 0H0z" fill="currentColor" stroke="none" /></Icon>
        </VScroll>
      </Workbook>

      <SheetBar>
        <button aria-label="Next sheet"><Icon w={6} h={10}><path d="M.5.500L5 5 .5 9.500" stroke="#999" strokeWidth="1.300" /></Icon></button>
        <SheetTabs>
          {SHEETS.map((s) => (
            <React.Fragment key={s.t}>
              <SheetTab $bg={s.bg} $fg={s.fg} $w={s.w} $on={s.on} dir="rtl"><span>{s.t}</span></SheetTab>
              <TabGap />
            </React.Fragment>
          ))}
        </SheetTabs>
        <AddButton aria-label="New sheet"><Icon w={11}><path d="M5.500 0v11M0 5.500h11" /></Icon></AddButton>
        <BarGrip><Icon w={2} h={11}><path d="M1 0v11" strokeWidth="2" strokeDasharray="2 2.500" /></Icon></BarGrip>
        <HScroll>
          <Icon w={8} h={9}><path d="M0 4.500L8 0v9z" fill="currentColor" stroke="none" /></Icon>
          <Thumb />
          <Icon w={8} h={9}><path d="M8 4.500L0 0v9z" fill="currentColor" stroke="none" /></Icon>
        </HScroll>
      </SheetBar>

      <StatusBar>
        <CutWord>y</CutWord>
        <AccessButton><Icon w={15}><circle cx="6" cy="2.500" r="1.800" /><path d="M1 4l4 2h3l4-2M5 6v3l-2 5M8 6v2M8 8l6 6M14 8l-6 6" strokeWidth="1.200" /></Icon>Accessibility: Investigate</AccessButton>
        <Views>
          <ViewButton $on aria-label="Normal view"><Icon w={14}><path d="M.5.500h13v13H.5zM5 .5v13M9.500.5v13M.5 5h13M.5 9.500h13" /></Icon></ViewButton>
          <ViewButton aria-label="Page layout view"><Icon w={14}><path d="M.5.500h13v13H.5zM3.500 3h7v8h-7zM5 5.500h4M5 7.500h4M5 9.500h4" /></Icon></ViewButton>
          <ViewButton aria-label="Page break view"><Icon w={14}><path d="M.5.500h13v13H.5zM.5 8.500h8v-8M4.500.5v8" /></Icon></ViewButton>
        </Views>
        <Zoom>
          <button aria-label="Zoom out"><Icon w={9}><path d="M0 4.500h9" /></Icon></button>
          <input type="range" aria-label="Zoom" />
          <button aria-label="Zoom in"><Icon w={9}><path d="M0 4.500h9M4.500 0v9" /></Icon></button>
          <ZoomValue>100%</ZoomValue>
        </Zoom>
      </StatusBar>

      <TaskBar>
        <Apps>
          {APPS.map((a) => (
            <AppButton key={a.name} $on={a.on} $dot={a.dot} aria-label={a.name}>
              <Icon w={24}>{a.art}</Icon>
              {a.count && <Count>{a.count}</Count>}
            </AppButton>
          ))}
        </Apps>
        <Tray>
          <TrayButton $w={36} aria-label="Show hidden icons"><Icon w={11} h={7}><path d="M.5 6l5-5 5 5" strokeWidth="1.500" /></Icon></TrayButton>
          <TrayButton $w={28} aria-label="Cloud sync"><Icon w={17} h={14}><path d="M4 11a3.500 3.500 0 0 1 0-7 5 5 0 0 1 9 1v6z" fill="#b8b8b8" stroke="none" /><circle cx="12" cy="9" r="4.800" fill="#e02018" stroke="none" /><path d="M10 7l4 4M14 7l-4 4" stroke="#fff" strokeWidth="1.200" /></Icon></TrayButton>
          <TrayButton $w={50}>ع</TrayButton>
          <TrayButton $w={24} aria-label="Network"><Icon w={17}><path d="M10 1.500H.5v10h13V8M4 14.500h7M7.500 11.500v3M12.500.500h3v4h-3zM14 5v9.500" /></Icon></TrayButton>
          <TrayButton $w={24} aria-label="Volume"><Icon w={17} h={15}><path d="M.5 5.500h3l4-4v12l-4-4h-3zM10 5c1 1.500 1 3.500 0 5M12 3c2 3 2 6 0 9M14 1.500c3 4 3 8 0 12" /></Icon></TrayButton>
          <TrayButton $w={24} aria-label="Battery"><Icon w={16} h={13}><path d="M5 3.500h8.500v8H1.500V8M15 6v3" strokeWidth="1.300" /><path d="M6 5.500h6v4H4z" fill="currentColor" stroke="none" /><path d="M3.500 0L0 5h2.500L1.500 8.500 5.500 3.500H3z" fill="currentColor" stroke="none" /></Icon></TrayButton>
          <Clock>07:29 PM<br />20/04/2025</Clock>
        </Tray>
      </TaskBar>

      <Watermark>
        <MarkArabic dir="rtl">مستقل</MarkArabic>
        <MarkLatin>mostaql.com</MarkLatin>
      </Watermark>
    </Window>
  );
}
